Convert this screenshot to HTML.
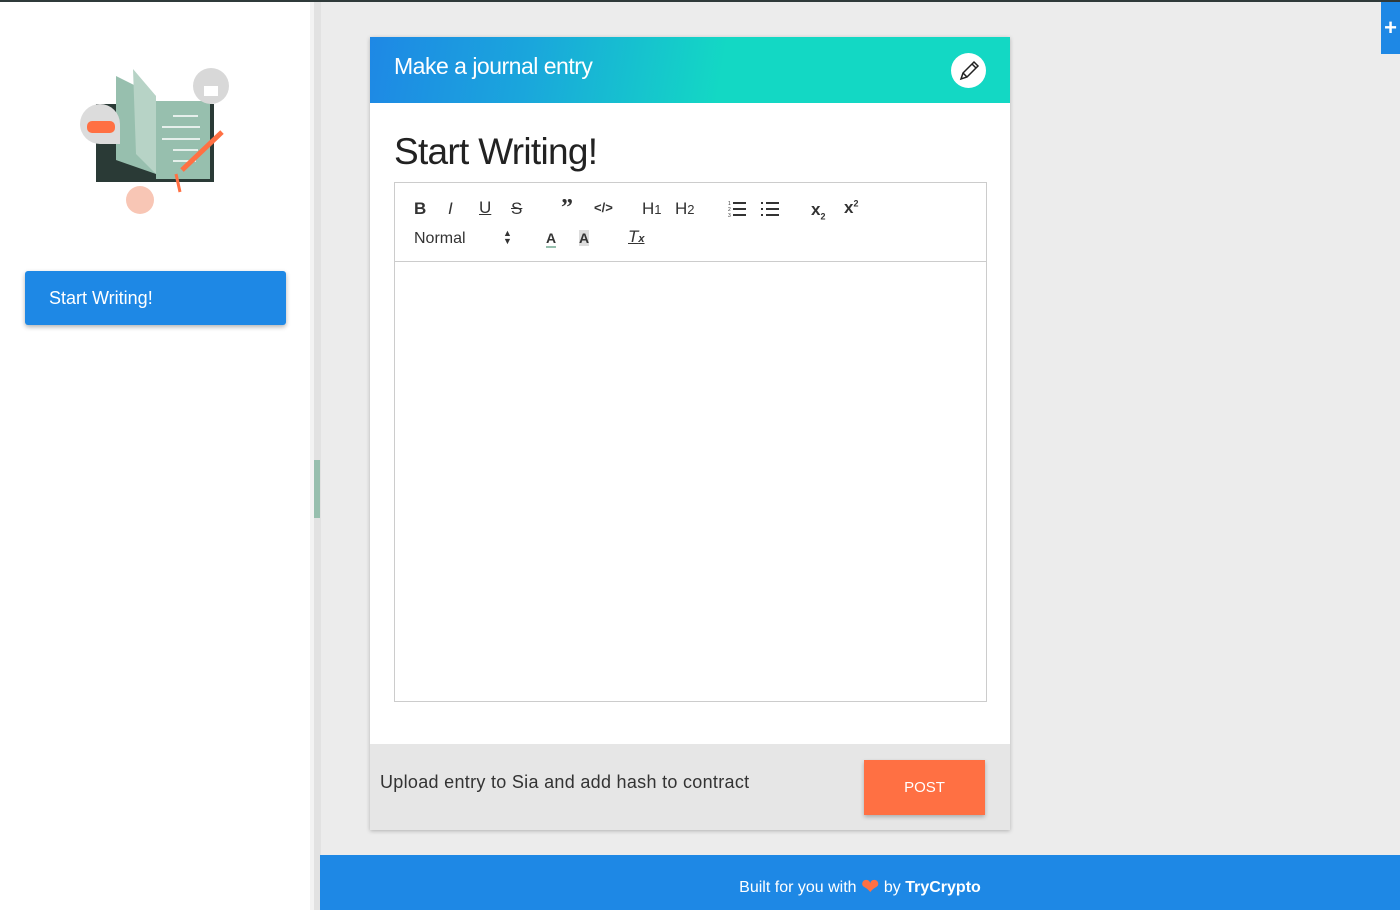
<!DOCTYPE html>
<html><head><meta charset="utf-8"><style>
*{box-sizing:border-box;margin:0;padding:0}
html,body{width:1400px;height:910px;overflow:hidden}
body{background:#ececec;font-family:"Liberation Sans",sans-serif;position:relative}
.topline{position:absolute;left:0;top:0;width:1400px;height:2px;background:#2f3a3a}
.side{position:absolute;left:0;top:2px;width:310px;height:908px;background:#fff}
.strip1{position:absolute;left:310px;top:2px;width:4px;height:908px;background:#f3f3f3}
.strip2{position:absolute;left:314px;top:2px;width:7px;height:908px;background:#e2e2e2}
.thumb{position:absolute;left:314px;top:460px;width:6px;height:58px;background:#97bfae}
.btn{position:absolute;left:25px;top:269px;width:261px;height:54px;background:#1e88e5;color:#fff;font-size:18px;line-height:54px;padding-left:24px;border-radius:3px;box-shadow:0 2px 5px rgba(0,0,0,.3)}
.card{position:absolute;left:370px;top:37px;width:640px;height:793px;background:#fff;box-shadow:0 1px 4px rgba(0,0,0,.25)}
.hdr{height:66px;background:linear-gradient(100deg,#1e88e5 0%,#1aa6dc 25%,#13d8c4 55%,#13d8c4 100%);color:#fff;font-size:23px;padding:16px 0 0 24px;position:relative;letter-spacing:-.5px}
.pen{position:absolute;right:24px;top:16px;width:35px;height:35px;border-radius:50%;background:#fff}
h1{font-weight:400;font-size:37px;color:#222;margin:28px 0 0 24px;letter-spacing:-.7px}
.ed{position:absolute;left:24px;top:145px;width:593px;height:520px;border:1px solid #ccc}
.tb{height:79px;border-bottom:1px solid #ccc;position:relative;font-size:17px;color:#333}
.tb span{position:absolute}
.ft{position:absolute;left:0;top:707px;width:640px;height:86px;background:#e6e6e6}
.ft .t{position:absolute;left:10px;top:28px;font-size:18px;color:#333;letter-spacing:.3px}
.post{position:absolute;left:494px;top:16px;width:121px;height:55px;background:#ff7043;color:#fff;font-size:15px;text-align:center;line-height:55px;box-shadow:0 2px 4px rgba(0,0,0,.25)}
.foot{position:absolute;left:320px;top:855px;width:1080px;height:55px;background:#1e88e5;color:#fff;font-size:16px;text-align:center;line-height:64px}
.plus{position:absolute;left:1381px;top:2px;width:19px;height:52px;background:#1e88e5;color:#fff;font-size:22px;font-weight:bold;text-align:center;line-height:52px}
</style></head><body>
<div class="topline"></div>
<div class="side">
<svg style="position:absolute;left:78px;top:62px" width="155" height="150" viewBox="0 0 155 150">
<rect x="18" y="40" width="118" height="78" fill="#2a3a36"/>
<polygon points="38,12 78,32 78,110 38,96" fill="#97bfae"/>
<polygon points="55,5 78,32 78,110 58,90" fill="#b7d3c6"/>
<rect x="78" y="37" width="54" height="78" fill="#97bfae"/>
<g stroke="#fff" stroke-width="1.5"><line x1="95" y1="52" x2="120" y2="52"/><line x1="84" y1="63" x2="122" y2="63"/><line x1="84" y1="75" x2="122" y2="75"/><line x1="95" y1="86" x2="120" y2="86"/><line x1="95" y1="97" x2="118" y2="97"/></g>
<circle cx="133" cy="22" r="18" fill="#d8d8d8"/><rect x="126" y="22" width="14" height="10" fill="#fff"/>
<path d="M2,60 a20,20 0 0 1 40,0 v20 h-20 a20,20 0 0 1 -20,-20z" fill="#dcdcdc"/>
<rect x="9" y="57" width="28" height="12" rx="5" fill="#ff7043"/>
<line x1="104" y1="106" x2="144" y2="68" stroke="#ff7043" stroke-width="5"/>
<circle cx="62" cy="136" r="14" fill="#f8c6b5"/>
<line x1="98" y1="110" x2="102" y2="128" stroke="#ff7043" stroke-width="3"/>
</svg>
<div class="btn">Start Writing!</div>
</div>
<div class="strip1"></div><div class="strip2"></div><div class="thumb"></div>
<div class="card">
<div class="hdr">Make a journal entry
<div class="pen"><svg width="35" height="35" viewBox="0 0 35 35"><g fill="none" stroke="#222" stroke-width="1.5"><path d="M10,26 L12,20 L23,9 L27,13 L16,24 Z"/><path d="M21,11 L25,15"/><path d="M12,20 L16,24"/></g></svg></div>
</div>
<h1>Start Writing!</h1>
<div class="ed">
<div class="tb">
<span style="left:19px;top:16px;font-weight:bold">B</span>
<span style="left:53px;top:16px;font-style:italic">I</span>
<span style="left:84px;top:15px;text-decoration:underline">U</span>
<span style="left:116px;top:16px;text-decoration:line-through">S</span>
<span style="left:166px;top:12px;font-weight:bold;font-size:24px;font-family:'Liberation Serif',serif">&#8221;</span>
<span style="left:199px;top:17px;font-size:13px;font-weight:bold">&lt;/&gt;</span>
<span style="left:247px;top:16px">H<small style="font-size:13px">1</small></span>
<span style="left:280px;top:16px">H<small style="font-size:13px">2</small></span>
<svg style="position:absolute;left:333px;top:18px" width="18" height="16"><g stroke="#333" stroke-width="2"><line x1="5" y1="2" x2="18" y2="2"/><line x1="5" y1="8" x2="18" y2="8"/><line x1="5" y1="14" x2="18" y2="14"/></g><g fill="#333" font-size="5"><text x="0" y="4">1</text><text x="0" y="10">2</text><text x="0" y="16">3</text></g></svg>
<svg style="position:absolute;left:366px;top:18px" width="18" height="16"><g stroke="#333" stroke-width="2"><line x1="5" y1="2" x2="18" y2="2"/><line x1="5" y1="8" x2="18" y2="8"/><line x1="5" y1="14" x2="18" y2="14"/><line x1="0" y1="2" x2="2" y2="2"/><line x1="0" y1="8" x2="2" y2="8"/><line x1="0" y1="14" x2="2" y2="14"/></g></svg>
<span style="left:416px;top:17px;font-weight:bold">x<sub style="font-size:9px">2</sub></span>
<span style="left:449px;top:15px;font-weight:bold">x<sup style="font-size:9px">2</sup></span>
<span style="left:19px;top:47px;font-size:16px">Normal</span>
<span style="left:108px;top:46px;font-size:9px;line-height:8px">&#9650;<br>&#9660;</span>
<span style="left:151px;top:47px;font-size:14px;font-weight:bold;border-bottom:2px solid #97bfae">A</span>
<span style="left:184px;top:47px;font-size:14px;font-weight:bold;background:#ddd">A</span>
<span style="left:233px;top:44px;font-style:italic;text-decoration:underline">T<small style="font-size:11px;font-weight:bold">x</small></span>
</div>
</div>
<div class="ft"><div class="t">Upload entry to Sia and add hash to contract</div><div class="post">POST</div></div>
</div>
<div class="foot">Built for you with <span style="color:#ff7043;font-size:22px;vertical-align:-2px">&#10084;</span> by <b>TryCrypto</b></div>
<div class="plus">+</div>
</body></html>
